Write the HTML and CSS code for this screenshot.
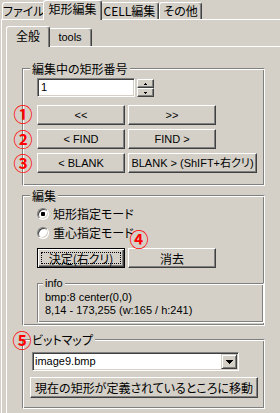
FILE: index.html
```html
<!DOCTYPE html>
<html lang="ja">
<head>
    <meta charset="UTF-8">
    <meta name="viewport" content="width=device-width, initial-scale=1.0">
    <title>矩形編集</title>
    <link rel="stylesheet" href="styles.css">
</head>
<body>
    <div class="window">
        <div class="tabbar outer-tabs">
            <div class="tab w43">ファイル</div>
            <div class="tab active w59">矩形編集</div>
            <div class="tab w59">CELL編集</div>
            <div class="tab w43">その他</div>
        </div>
        <div class="panel outer-panel">
            <div class="tabbar inner-tabs">
                <div class="tab active w44">全般</div>
                <div class="tab w44 latin">tools</div>
            </div>
            <div class="panel inner-panel">

                <fieldset class="group group-num">
                    <legend>編集中の矩形番号</legend>
                    <div class="group-body num-body">
                        <div class="num-row">
                            <div class="textbox latin">1</div>
                            <div class="spin">
                                <span class="spin-btn">
                                    <svg width="3" height="2" viewBox="0 0 3 2"><path d="M1 0h1v1H1zM0 1h3v1H0z"/></svg>
                                </span>
                                <span class="spin-btn">
                                    <svg width="3" height="2" viewBox="0 0 3 2"><path d="M0 0h3v1H0zM1 1h1v1H1z"/></svg>
                                </span>
                            </div>
                        </div>
                        <div class="nav">
                            <div class="btn-row">
                                <button class="btn latin">&lt;&lt;</button>
                                <button class="btn latin">&gt;&gt;</button>
                            </div>
                            <div class="btn-row">
                                <button class="btn latin">&lt; FIND</button>
                                <button class="btn latin">FIND &gt;</button>
                            </div>
                            <div class="btn-row">
                                <button class="btn latin">&lt; BLANK</button>
                                <button class="btn latin wide">BLANK &gt; (ShIFT+右クリ)</button>
                            </div>
                        </div>
                    </div>
                </fieldset>

                <fieldset class="group group-edit">
                    <legend>編集</legend>
                    <div class="group-body edit-body">
                        <label class="radio-row"><span class="radio checked"></span>矩形指定モード</label>
                        <label class="radio-row"><span class="radio"></span>重心指定モード</label>
                        <div class="btn-row edit-buttons">
                            <button class="btn default">決定(右クリ)</button>
                            <button class="btn">消去</button>
                        </div>
                        <fieldset class="group group-info">
                            <legend class="latin">info</legend>
                            <div class="info-text latin">
                                bmp:8 center(0,0)<br>
                                8,14 - 173,255 (w:165 / h:241)
                            </div>
                        </fieldset>
                    </div>
                </fieldset>

                <fieldset class="group group-bitmap">
                    <legend>ビットマップ</legend>
                    <div class="group-body bitmap-body">
                        <div class="combo">
                            <span class="combo-text latin">image9.bmp</span>
                            <span class="combo-btn">
                                <svg width="7" height="4" viewBox="0 0 7 4"><path d="M0 0h7v1H0zM1 1h5v1H1zM2 2h3v1H2zM3 3h1v1H3z"/></svg>
                            </span>
                        </div>
                        <button class="btn move-btn">現在の矩形が定義されているところに移動</button>
                    </div>
                </fieldset>

            </div>
        </div>

        <!-- red annotation marks -->
        <span class="mark mark-1">①</span>
        <span class="mark mark-2">②</span>
        <span class="mark mark-3">③</span>
        <span class="mark mark-4">④</span>
        <span class="mark mark-5">⑤</span>
    </div>
</body>
</html>
```

FILE: styles.css
```css
* {
    box-sizing: border-box;
}
body {
    margin: 0;
    background: #d4d0c8;
    color: #000;
    font: 12px/15px "Noto Sans CJK JP", sans-serif;
    font-feature-settings: "palt";
}
.latin {
    font-family: "Liberation Sans", "Noto Sans CJK JP", sans-serif;
    font-size: 11px;
}
.window {
    position: relative;
    width: 280px;
    height: 413px;
    overflow: hidden;
    padding-left: 1px;
}

/* tabs */
.tabbar {
    display: flex;
    align-items: flex-end;
}
.outer-tabs {
    height: 19px;
    padding-left: 1px;
}
.inner-tabs {
    height: 20px;
    margin-top: 6px;
    padding-left: 6px;
}
.tab {
    height: 17px;
    border: 1px solid #fff;
    border-bottom: none;
    border-right-color: #404040;
    border-radius: 3px 3px 0 0;
    box-shadow: inset -1px 0 #808080;
    background: #d4d0c8;
    text-align: center;
    line-height: 15px;
    white-space: nowrap;
    flex-shrink: 0;
}
.inner-tabs .tab {
    height: 18px;
    padding-top: 1px;
}
.tab.active {
    position: relative;
    z-index: 1;
    height: 20px;
    margin: 0 -2px -1px;
}
.inner-tabs .tab.active {
    height: 21px;
}
.w43 { width: 43px; }
.w44 { width: 44px; }
.w59 { width: 59px; }

.panel {
    border-top: 1px solid #fff;
    border-left: 1px solid #fff;
}
.outer-panel {
    width: 320px;
    height: 420px;
}
.inner-panel {
    margin-left: 4px;
    width: 300px;
    height: 400px;
}

/* group boxes */
.group {
    margin: 0;
    padding: 0;
    min-width: 0;
    border: 1px solid;
    border-color: #808080 #fff #fff #808080;
    box-shadow: inset 1px 1px #fff, inset -1px -1px #808080;
}
.group legend {
    margin-left: 7px;
    padding: 0 2px;
    line-height: 15px;
    background: #d4d0c8;
}
.group-num {
    margin: 14px 0 0 15px;
    width: 243px;
}
.group-edit {
    margin: 2px 0 0 15px;
    width: 243px;
}
.group-bitmap {
    margin: 6px 0 0 15px;
    width: 243px;
}
.group-info {
    margin: 8px 0 0 7px;
    width: 227px;
}
.group-info legend {
    margin-left: 5px;
}

.num-body {
    padding: 2px 0 12px 14px;
}
.edit-body {
    padding: 1px 0 2px 7px;
}
.bitmap-body {
    padding: 5px 0 10px 7px;
}

/* controls */
.num-row {
    display: flex;
    align-items: flex-start;
}
.textbox {
    width: 98px;
    height: 19px;
    padding: 1px 3px;
    line-height: 15px;
    background: #fff;
    border: 1px solid;
    border-color: #808080 #fff #fff #808080;
    box-shadow: inset 1px 1px #404040, inset -1px -1px #d4d0c8;
}
.spin {
    display: flex;
    flex-direction: column;
    width: 17px;
    margin: 1px 0 0 2px;
}
.spin-btn {
    display: flex;
    align-items: center;
    justify-content: center;
    height: 9px;
    border: 1px solid;
    border-color: #fff #404040 #404040 #fff;
    box-shadow: inset -1px -1px #808080;
}
.nav {
    display: flex;
    flex-direction: column;
    gap: 4px;
    margin-top: 8px;
}
.btn-row {
    display: flex;
    gap: 3px;
}
.btn {
    width: 88px;
    height: 20px;
    margin: 0;
    padding: 0;
    color: #000;
    background: #d4d0c8;
    font: inherit;
    font-feature-settings: "palt";
    border: 1px solid;
    border-color: #fff #404040 #404040 #fff;
    box-shadow: inset -1px -1px #808080;
    white-space: nowrap;
}
.btn.latin {
    font-family: "Liberation Sans", "Noto Sans CJK JP", sans-serif;
    font-size: 11px;
}
.btn.wide {
    width: 129px;
}
.btn.default {
    border-color: #000;
    box-shadow: inset 1px 1px #fff, inset -1px -1px #404040, inset -2px -2px #808080;
    outline: 1px dotted #000;
    outline-offset: -5px;
}
.radio-row {
    display: flex;
    align-items: center;
    gap: 4px;
    height: 19px;
    padding-left: 7px;
}
.radio {
    width: 12px;
    height: 12px;
    border-radius: 50%;
    border: 1px solid;
    border-color: #808080 #fff #fff #808080;
    box-shadow: inset 1px 1px #404040, inset -1px -1px #d4d0c8;
    background: #fff;
}
.radio.checked {
    background: radial-gradient(circle, #000 2px, #fff 2.5px);
}
.edit-buttons {
    margin: 6px 0 0 7px;
}
.info-text {
    padding: 0 0 5px 7px;
    line-height: 13px;
}

.combo {
    display: flex;
    width: 207px;
    height: 19px;
    margin-left: 2px;
    padding: 1px;
    background: #fff;
    border: 1px solid;
    border-color: #808080 #fff #fff #808080;
    box-shadow: inset 1px 1px #404040, inset -1px -1px #d4d0c8;
}
.combo-text {
    flex: 1;
    padding-left: 1px;
    line-height: 15px;
}
.combo-btn {
    display: flex;
    align-items: center;
    justify-content: center;
    width: 16px;
    background: #d4d0c8;
    border: 1px solid;
    border-color: #d4d0c8 #404040 #404040 #d4d0c8;
    box-shadow: inset 1px 1px #fff, inset -1px -1px #808080;
}
.move-btn {
    display: block;
    width: 228px;
    height: 21px;
    margin-top: 6px;
}

/* red annotation marks drawn over the form */
.mark {
    position: absolute;
    width: 20px;
    height: 18px;
    margin: -9px 0 0 -10px;
    color: #f00;
    font: 700 19px/18px "Noto Sans CJK JP", sans-serif;
    text-align: center;
}
.mark-1 { left: 23px; top: 114px; }
.mark-2 { left: 23px; top: 139px; }
.mark-3 { left: 23px; top: 163px; }
.mark-4 { left: 139px; top: 239px; }
.mark-5 { left: 22px; top: 340px; }
```
